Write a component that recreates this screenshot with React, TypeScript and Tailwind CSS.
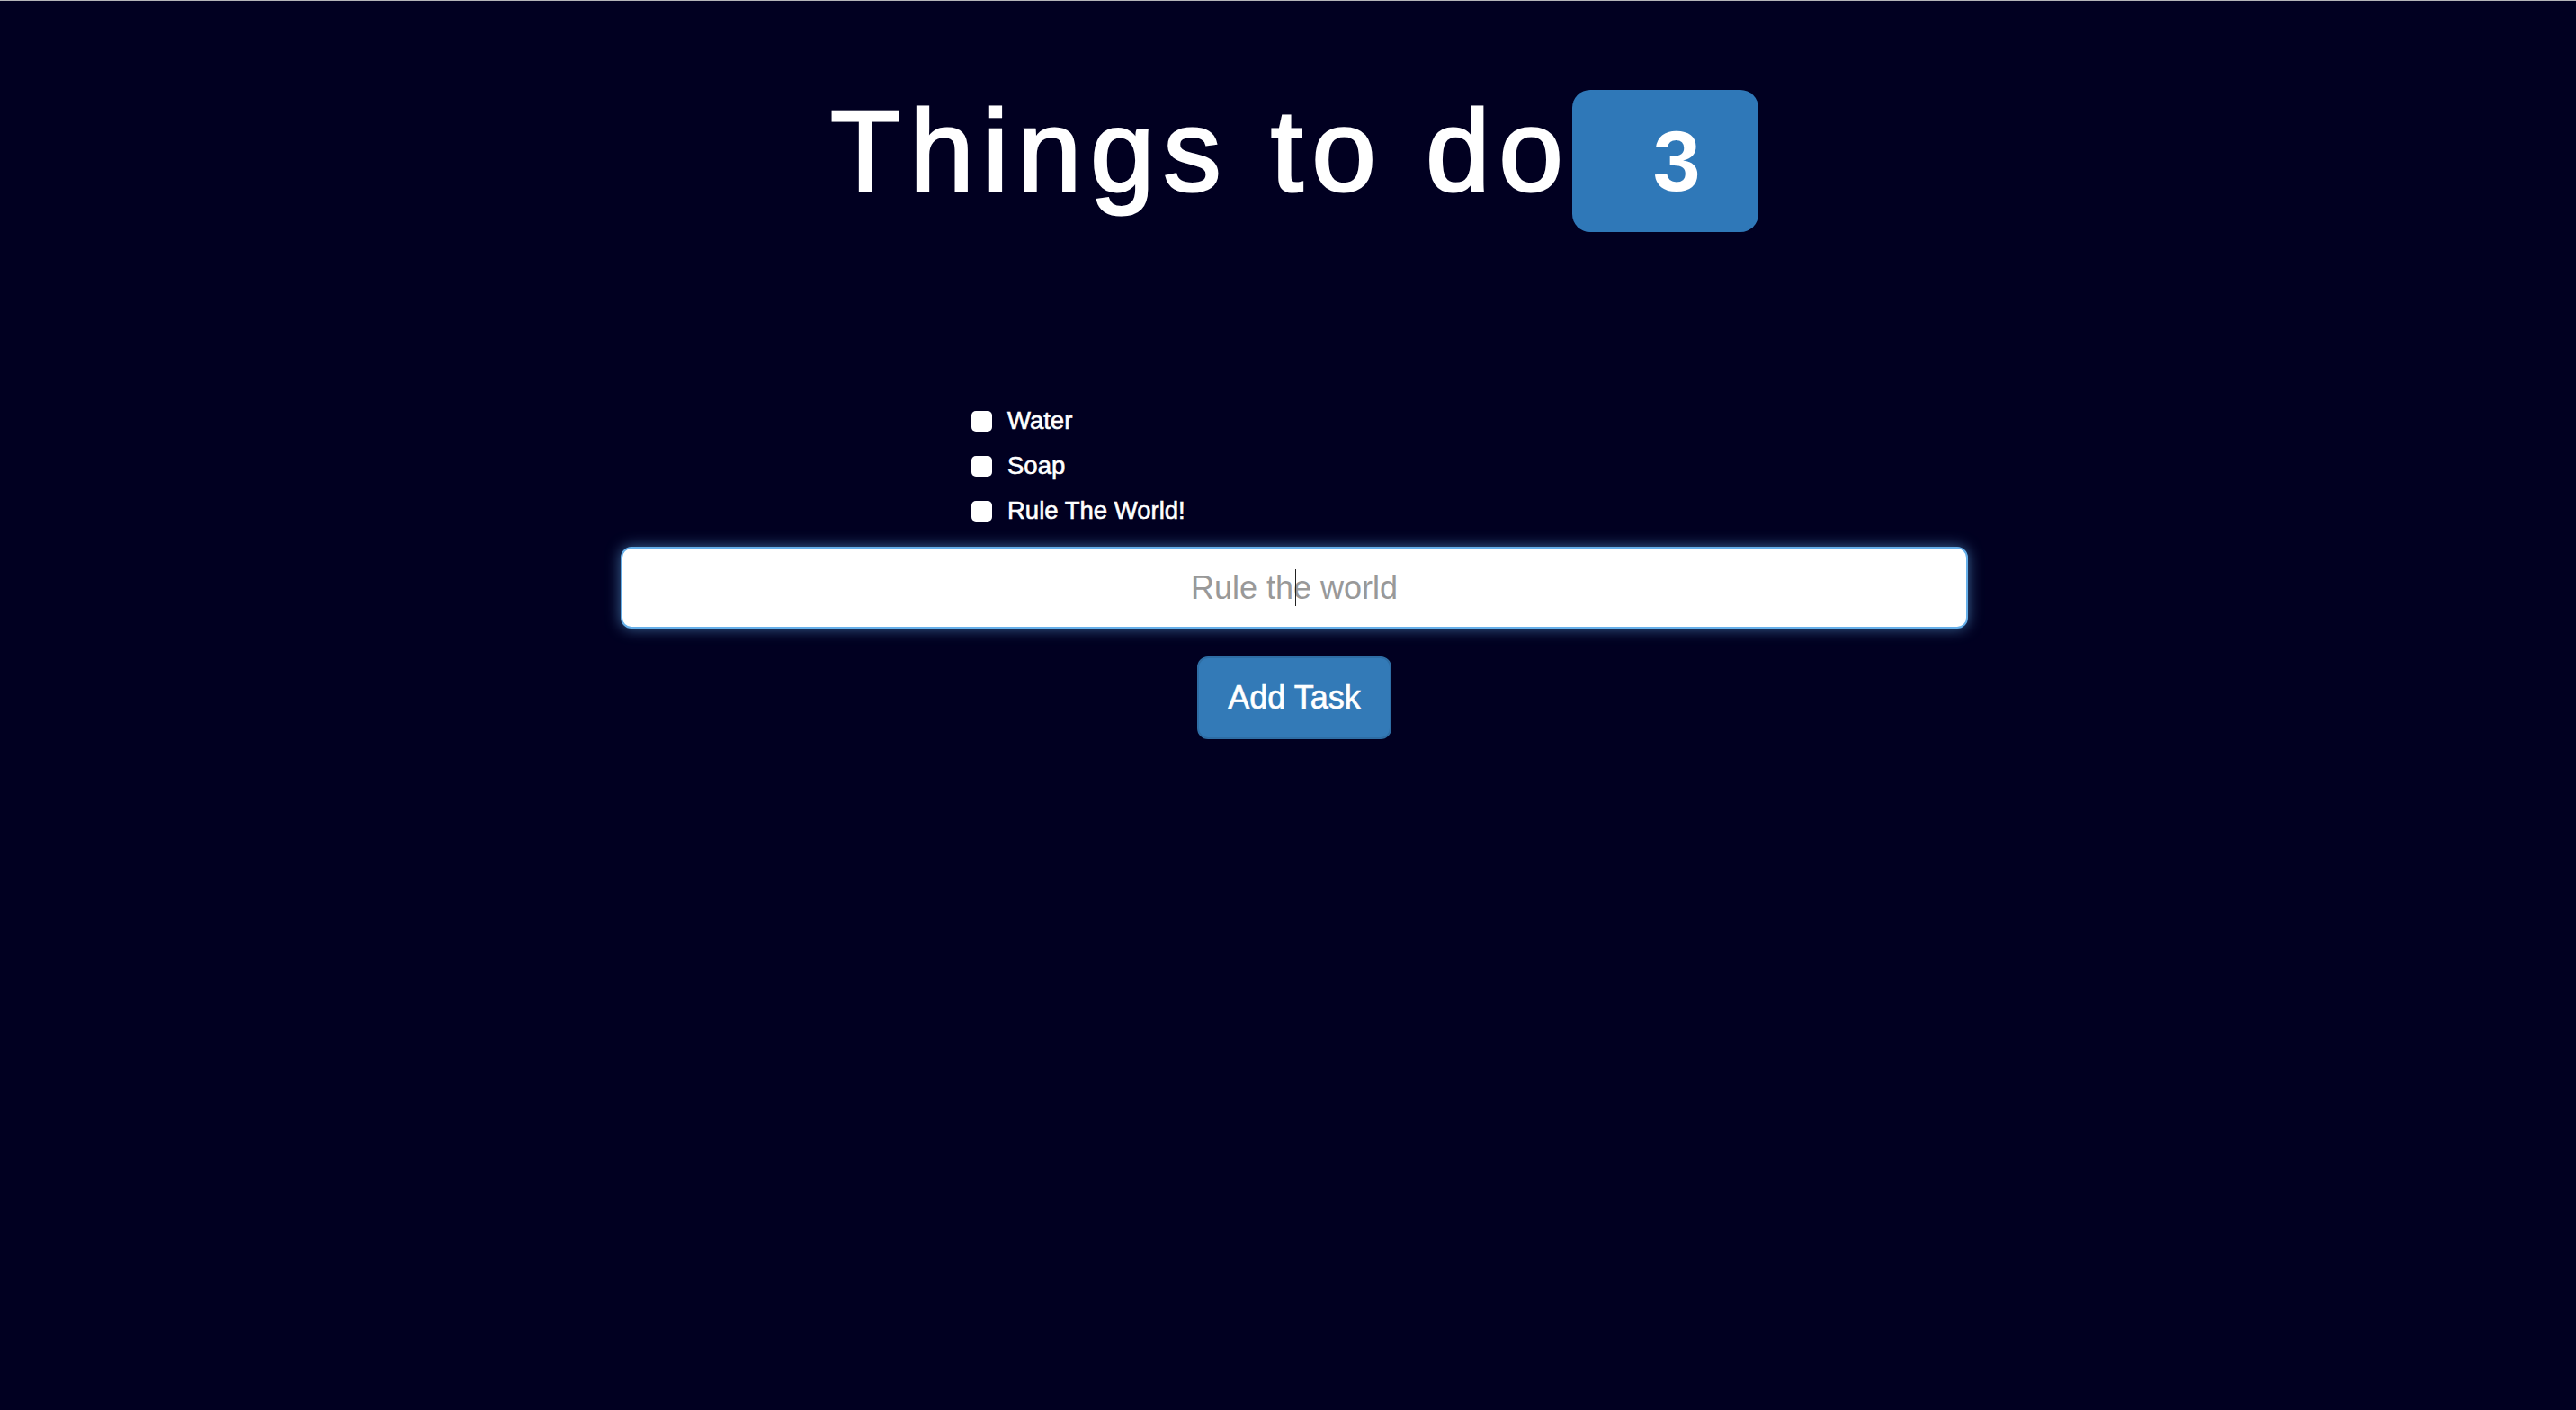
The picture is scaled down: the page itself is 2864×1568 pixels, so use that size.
import React from "react";

const font = { fontFamily: '"Liberation Sans", Arial, Helvetica, sans-serif' };

export default function App() {
  const tasks = ["Water", "Soap", "Rule The World!"];
  return (
    <div
      className="min-h-screen w-full bg-[#010021] border-t border-[#b4b4b8] pl-[14px]"
      style={font}
    >
      <div className="flex flex-col items-center">
        <h1 className="flex items-start pt-[99px] text-white">
          <span className="mt-[4px] text-[128px] leading-[128px] tracking-[10px] font-normal [-webkit-text-stroke:3px_white]">
            Things to do
          </span>
          <span className="flex h-[158px] w-[207px] items-center justify-center rounded-[20px] bg-[#2f78b8] pl-[26px] text-[95px] font-bold leading-none text-white">
            3
          </span>
        </h1>

        <div className="mt-[185px] w-[1498px]">
          <ul className="flex flex-col pl-[390px]">
            {tasks.map((t) => (
              <li key={t} className="flex h-[50px] items-center">
                <input
                  type="checkbox"
                  className="h-[23px] w-[23px] appearance-none rounded-[5px] bg-white"
                />
                <span className="ml-[17px] text-[27.5px] text-white [-webkit-text-stroke:0.6px_white]">
                  {t}
                </span>
              </li>
            ))}
          </ul>

          <div className="relative mt-[15px]">
            <input
              type="text"
              placeholder="Rule the world"
              className="h-[91px] w-full rounded-[12px] border-2 border-[#66afe9] bg-white text-center text-[36px] text-[#333] placeholder:text-[#999] outline-none shadow-[0_0_16px_rgba(102,175,233,0.6)]"
              style={font}
            />
            <div className="pointer-events-none absolute left-[750px] top-[25px] h-[41px] w-[1px] bg-[#222]" />
          </div>

          <div className="mt-[31px] flex justify-center">
            <button
              className="h-[92px] rounded-[12px] border-2 border-[#2e6da4] bg-[#337ab7] px-[32px] text-[36px] text-white [-webkit-text-stroke:0.6px_white]"
              style={font}
            >
              Add Task
            </button>
          </div>
        </div>
      </div>
    </div>
  );
}
